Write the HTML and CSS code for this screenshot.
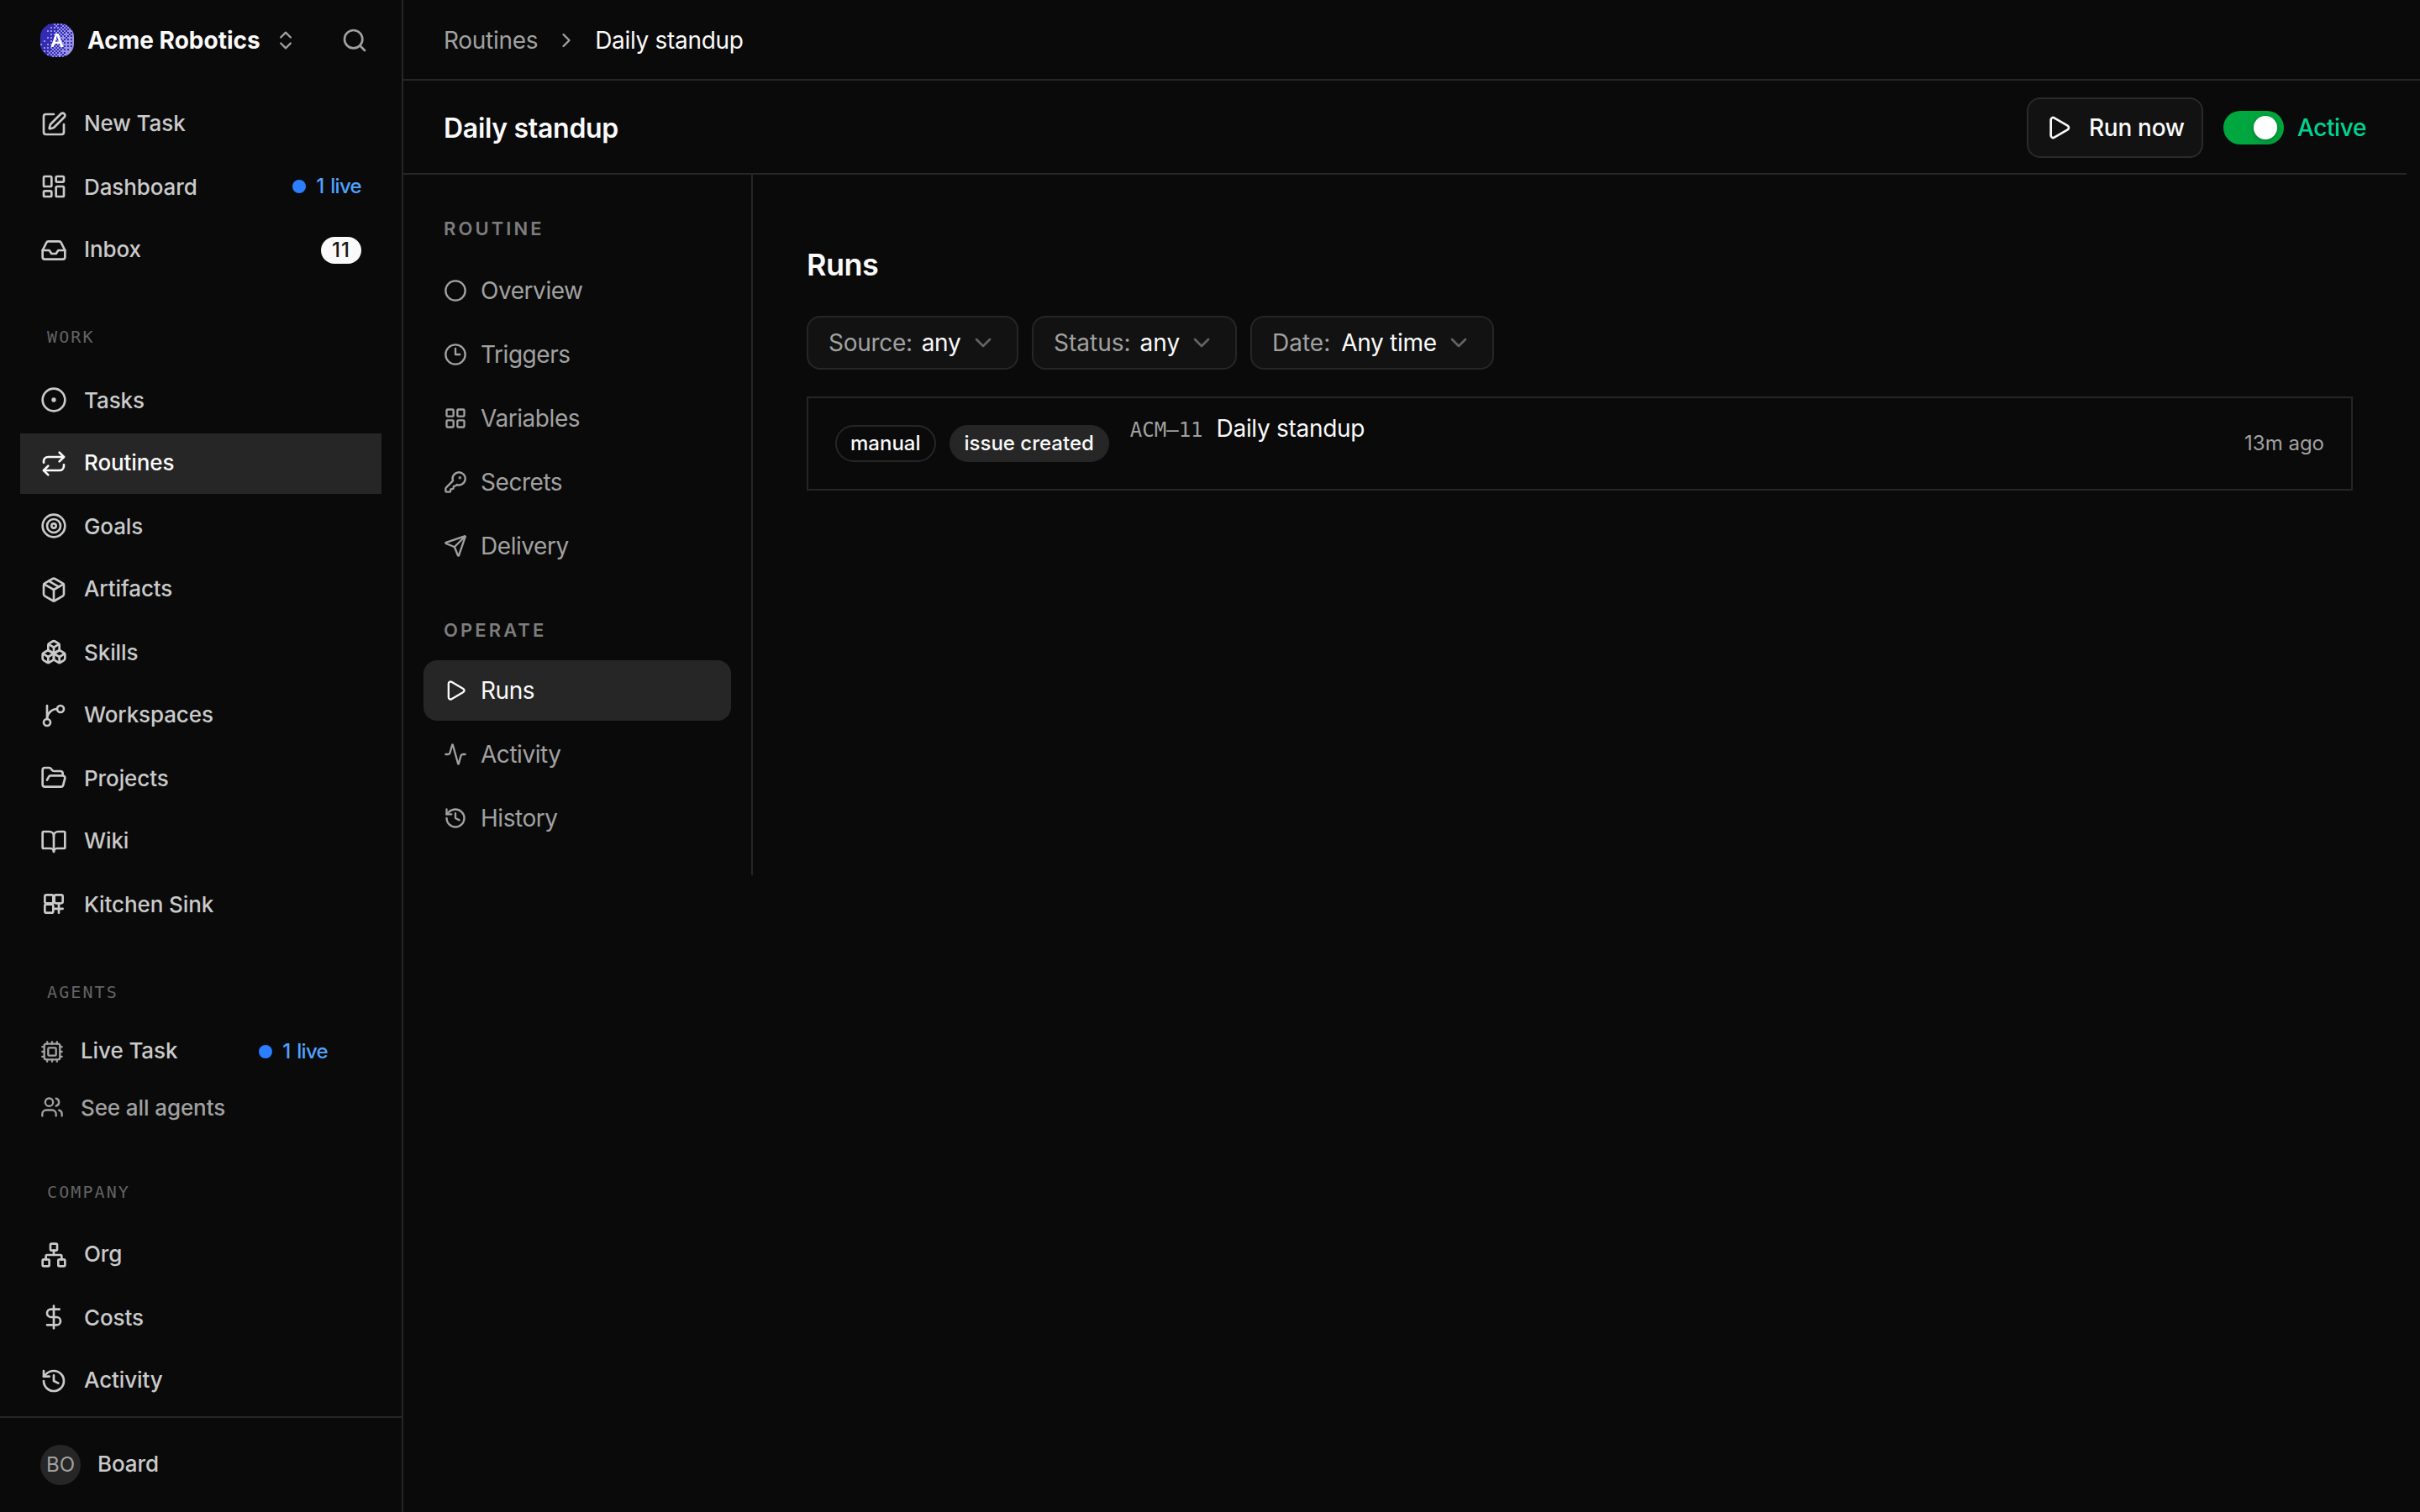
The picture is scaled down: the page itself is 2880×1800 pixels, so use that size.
FILE: index.html
```html
<!DOCTYPE html>
<html lang="en">
<head>
  <meta charset="UTF-8" />
  <meta name="viewport" content="width=device-width, initial-scale=1.0" />
  <title>Daily standup - Acme Robotics</title>
  <link rel="stylesheet" href="styles.css">
</head>
<body>
  <aside class="sidebar">
    <div class="company-bar">
      <button class="company-switcher">
        <span class="company-logo"><canvas id="logoPattern" width="20" height="20"></canvas><b>A</b></span>
        <span class="company-name">Acme Robotics</span>
        <svg class="icon icon-sm" viewBox="0 0 24 24"><path d="m7 15 5 5 5-5"/><path d="m7 9 5-5 5 5"/></svg>
      </button>
      <button class="search-button" aria-label="Search">
        <svg class="icon" viewBox="0 0 24 24"><circle cx="11" cy="11" r="8"/><path d="m21 21-4.3-4.3"/></svg>
      </button>
    </div>

    <nav class="sidebar-nav">
      <div class="nav-group nav-main">
        <a class="nav-item" href="#">
          <svg class="icon" viewBox="0 0 24 24"><path d="M12 3H5a2 2 0 0 0-2 2v14a2 2 0 0 0 2 2h14a2 2 0 0 0 2-2v-7"/><path d="M18.375 2.625a1 1 0 0 1 3 3l-9.013 9.014a2 2 0 0 1-.853.505l-2.873.84a.5.5 0 0 1-.62-.62l.84-2.873a2 2 0 0 1 .506-.852z"/></svg>
          <span class="nav-label">New Task</span>
        </a>
        <a class="nav-item low" href="#">
          <svg class="icon" viewBox="0 0 24 24"><rect width="7" height="9" x="3" y="3" rx="1"/><rect width="7" height="5" x="14" y="3" rx="1"/><rect width="7" height="9" x="14" y="12" rx="1"/><rect width="7" height="5" x="3" y="16" rx="1"/></svg>
          <span class="nav-label">Dashboard</span>
          <span class="live"><i class="live-dot"></i><span>1 live</span></span>
        </a>
        <a class="nav-item" href="#">
          <svg class="icon" viewBox="0 0 24 24"><polyline points="22 12 16 12 14 15 10 15 8 12 2 12"/><path d="M5.45 5.11 2 12v6a2 2 0 0 0 2 2h16a2 2 0 0 0 2-2v-6l-3.45-6.89A2 2 0 0 0 16.76 4H7.24a2 2 0 0 0-1.79 1.11z"/></svg>
          <span class="nav-label">Inbox</span>
          <span class="count">11</span>
        </a>
      </div>

      <h2 class="nav-heading">Work</h2>
      <div class="nav-group nav-work">
        <a class="nav-item low" href="#">
          <svg class="icon" viewBox="0 0 24 24"><circle cx="12" cy="12" r="10"/><circle cx="12" cy="12" r="1"/></svg>
          <span class="nav-label">Tasks</span>
        </a>
        <a class="nav-item active" href="#">
          <svg class="icon" viewBox="0 0 24 24"><path d="m17 2 4 4-4 4"/><path d="M3 11v-1a4 4 0 0 1 4-4h14"/><path d="m7 22-4-4 4-4"/><path d="M21 13v1a4 4 0 0 1-4 4H3"/></svg>
          <span class="nav-label">Routines</span>
        </a>
        <a class="nav-item low" href="#">
          <svg class="icon" viewBox="0 0 24 24"><circle cx="12" cy="12" r="10"/><circle cx="12" cy="12" r="6"/><circle cx="12" cy="12" r="2"/></svg>
          <span class="nav-label">Goals</span>
        </a>
        <a class="nav-item" href="#">
          <svg class="icon" viewBox="0 0 24 24"><path d="M11 21.73a2 2 0 0 0 2 0l7-4A2 2 0 0 0 21 16V8a2 2 0 0 0-1-1.73l-7-4a2 2 0 0 0-2 0l-7 4A2 2 0 0 0 3 8v8a2 2 0 0 0 1 1.73z"/><path d="M12 22V12"/><polyline points="3.29 7 12 12 20.71 7"/><path d="m7.5 4.27 9 5.15"/></svg>
          <span class="nav-label">Artifacts</span>
        </a>
        <a class="nav-item low" href="#">
          <svg class="icon" viewBox="0 0 24 24"><path d="M2.97 12.92A2 2 0 0 0 2 14.63v3.24a2 2 0 0 0 .97 1.71l3 1.8a2 2 0 0 0 2.06 0L12 19v-5.5l-5-3-4.03 2.42Z"/><path d="m7 16.5-4.74-2.85"/><path d="m7 16.5 5-3"/><path d="M7 16.5v5.17"/><path d="M12 13.5V19l3.97 2.38a2 2 0 0 0 2.06 0l3-1.8a2 2 0 0 0 .97-1.71v-3.24a2 2 0 0 0-.97-1.71L17 10.5l-5 3Z"/><path d="m17 16.5-5-3"/><path d="m17 16.5 4.74-2.85"/><path d="M17 16.5v5.17"/><path d="M7.97 4.42A2 2 0 0 0 7 6.13v4.37l5 3 5-3V6.13a2 2 0 0 0-.97-1.71l-3-1.8a2 2 0 0 0-2.06 0l-3 1.8Z"/><path d="M12 8 7.26 5.15"/><path d="m12 8 4.74-2.85"/><path d="M12 13.5V8"/></svg>
          <span class="nav-label">Skills</span>
        </a>
        <a class="nav-item" href="#">
          <svg class="icon" viewBox="0 0 24 24"><path d="M6 3v12"/><circle cx="18" cy="6" r="3"/><circle cx="6" cy="18" r="3"/><path d="M15 6a9 9 0 0 0-9 9"/></svg>
          <span class="nav-label">Workspaces</span>
        </a>
        <a class="nav-item low" href="#">
          <svg class="icon" viewBox="0 0 24 24"><path d="m6 14 1.5-2.9A2 2 0 0 1 9.24 10H20a2 2 0 0 1 1.94 2.5l-1.54 6a2 2 0 0 1-1.95 1.5H4a2 2 0 0 1-2-2V5a2 2 0 0 1 2-2h3.9a2 2 0 0 1 1.69.9l.81 1.2a2 2 0 0 0 1.67.9H18a2 2 0 0 1 2 2v2"/></svg>
          <span class="nav-label">Projects</span>
        </a>
        <a class="nav-item" href="#">
          <svg class="icon" viewBox="0 0 24 24"><path d="M12 7v14"/><path d="M3 18a1 1 0 0 1-1-1V4a1 1 0 0 1 1-1h5a4 4 0 0 1 4 4 4 4 0 0 1 4-4h5a1 1 0 0 1 1 1v13a1 1 0 0 1-1 1h-6a3 3 0 0 0-3 3 3 3 0 0 0-3-3z"/></svg>
          <span class="nav-label">Wiki</span>
        </a>
        <a class="nav-item low" href="#">
          <svg class="icon" viewBox="0 0 24 24"><rect x="4" y="4" width="7.5" height="7.5" rx="1.5"/><rect x="12.5" y="4" width="7.5" height="7.5" rx="1.5"/><rect x="4" y="12.5" width="7.5" height="7.5" rx="1.5"/><path d="M16.5 12.5V20M12.5 16.4H20"/></svg>
          <span class="nav-label">Kitchen Sink</span>
        </a>
      </div>

      <h2 class="nav-heading">Agents</h2>
      <div class="agent-list">
        <a class="agent-item" href="#">
          <svg class="icon icon-sm" viewBox="0 0 24 24"><path d="M12 20v2M12 2v2M17 20v2M17 2v2M2 12h2M2 17h2M2 7h2M20 12h2M20 17h2M20 7h2M7 20v2M7 2v2"/><rect x="4" y="4" width="16" height="16" rx="2"/><rect x="8" y="8" width="8" height="8" rx="1"/></svg>
          <span class="nav-label">Live Task</span>
          <span class="live"><i class="live-dot"></i><span>1 live</span></span>
        </a>
        <a class="agent-item low muted" href="#">
          <svg class="icon icon-sm" viewBox="0 0 24 24"><path d="M16 21v-2a4 4 0 0 0-4-4H6a4 4 0 0 0-4 4v2"/><path d="M16 3.128a4 4 0 0 1 0 7.744"/><path d="M22 21v-2a4 4 0 0 0-3-3.87"/><circle cx="9" cy="7" r="4"/></svg>
          <span class="nav-label">See all agents</span>
        </a>
      </div>

      <h2 class="nav-heading">Company</h2>
      <div class="nav-group nav-company">
        <a class="nav-item" href="#">
          <svg class="icon" viewBox="0 0 24 24"><rect x="16" y="16" width="6" height="6" rx="1"/><rect x="2" y="16" width="6" height="6" rx="1"/><rect x="9" y="2" width="6" height="6" rx="1"/><path d="M5 16v-3a1 1 0 0 1 1-1h12a1 1 0 0 1 1 1v3"/><path d="M12 12V8"/></svg>
          <span class="nav-label">Org</span>
        </a>
        <a class="nav-item low" href="#">
          <svg class="icon" viewBox="0 0 24 24"><path d="M12 2v20"/><path d="M17 5H9.5a3.5 3.5 0 0 0 0 7h5a3.5 3.5 0 0 1 0 7H6"/></svg>
          <span class="nav-label">Costs</span>
        </a>
        <a class="nav-item" href="#">
          <svg class="icon" viewBox="0 0 24 24"><path d="M3 12a9 9 0 1 0 9-9 9.75 9.75 0 0 0-6.74 2.74L3 8"/><path d="M3 3v5h5"/><path d="M12 7v5l4 2"/></svg>
          <span class="nav-label">Activity</span>
        </a>
      </div>
    </nav>

    <footer class="sidebar-footer">
      <span class="avatar">BO</span>
      <span class="nav-label">Board</span>
    </footer>
  </aside>

  <div class="page">
    <header class="breadcrumbs">
      <a href="#">Routines</a>
      <svg class="icon icon-sm" viewBox="0 0 24 24"><path d="m9 18 6-6-6-6"/></svg>
      <span class="current">Daily standup</span>
    </header>

    <main class="routine">
      <div class="routine-header">
        <h1>Daily standup</h1>
        <button class="run-button">
          <svg class="icon" viewBox="0 0 24 24"><path d="M5 5a2 2 0 0 1 3.008-1.728l11.997 6.998a2 2 0 0 1 .003 3.458l-12 7A2 2 0 0 1 5 19z"/></svg>
          <span>Run now</span>
        </button>
        <span class="toggle"><i class="toggle-thumb"></i></span>
        <span class="status">Active</span>
      </div>

      <div class="routine-body">
        <nav class="subnav">
          <h2 class="subnav-heading">Routine</h2>
          <a class="subnav-item" href="#">
            <svg class="icon icon-sm" viewBox="0 0 24 24"><circle cx="12" cy="12" r="10"/></svg>
            <span>Overview</span>
          </a>
          <a class="subnav-item" href="#">
            <svg class="icon icon-sm" viewBox="0 0 24 24"><circle cx="12" cy="12" r="10"/><path d="M12 6v6h4.5"/></svg>
            <span>Triggers</span>
          </a>
          <a class="subnav-item" href="#">
            <svg class="icon icon-sm" viewBox="0 0 24 24"><rect width="7" height="7" x="3" y="3" rx="1"/><rect width="7" height="7" x="14" y="3" rx="1"/><rect width="7" height="7" x="14" y="14" rx="1"/><rect width="7" height="7" x="3" y="14" rx="1"/></svg>
            <span>Variables</span>
          </a>
          <a class="subnav-item" href="#">
            <svg class="icon icon-sm" viewBox="0 0 24 24"><path d="M2.586 17.414A2 2 0 0 0 2 18.828V21a1 1 0 0 0 1 1h3a1 1 0 0 0 1-1v-1a1 1 0 0 1 1-1h1a1 1 0 0 0 1-1v-1a1 1 0 0 1 1-1h.172a2 2 0 0 0 1.414-.586l.814-.814a6.5 6.5 0 1 0-4-4z"/><circle cx="16.5" cy="7.5" r=".5" fill="currentColor"/></svg>
            <span>Secrets</span>
          </a>
          <a class="subnav-item" href="#">
            <svg class="icon icon-sm" viewBox="0 0 24 24"><path d="M14.536 21.686a.5.5 0 0 0 .937-.024l6.5-19a.496.496 0 0 0-.635-.635l-19 6.5a.5.5 0 0 0-.024.937l7.93 3.18a2 2 0 0 1 1.112 1.11z"/><path d="m21.854 2.147-10.94 10.939"/></svg>
            <span>Delivery</span>
          </a>

          <h2 class="subnav-heading operate">Operate</h2>
          <a class="subnav-item active" href="#">
            <svg class="icon icon-sm" viewBox="0 0 24 24"><path d="M5 5a2 2 0 0 1 3.008-1.728l11.997 6.998a2 2 0 0 1 .003 3.458l-12 7A2 2 0 0 1 5 19z"/></svg>
            <span>Runs</span>
          </a>
          <a class="subnav-item" href="#">
            <svg class="icon icon-sm" viewBox="0 0 24 24"><path d="M22 12h-2.48a2 2 0 0 0-1.93 1.46l-2.35 8.36a.25.25 0 0 1-.48 0L9.24 2.18a.25.25 0 0 0-.48 0l-2.35 8.36A2 2 0 0 1 4.49 12H2"/></svg>
            <span>Activity</span>
          </a>
          <a class="subnav-item" href="#">
            <svg class="icon icon-sm" viewBox="0 0 24 24"><path d="M3 12a9 9 0 1 0 9-9 9.75 9.75 0 0 0-6.74 2.74L3 8"/><path d="M3 3v5h5"/><path d="M12 7v5l4 2"/></svg>
            <span>History</span>
          </a>
        </nav>

        <section class="runs">
          <h2>Runs</h2>
          <div class="filters">
            <button class="filter filter-source">
              <span class="filter-name">Source:</span><span class="filter-value">any</span>
              <svg class="icon" viewBox="0 0 24 24"><path d="m6 9 6 6 6-6"/></svg>
            </button>
            <button class="filter filter-status">
              <span class="filter-name">Status:</span><span class="filter-value">any</span>
              <svg class="icon" viewBox="0 0 24 24"><path d="m6 9 6 6 6-6"/></svg>
            </button>
            <button class="filter filter-date">
              <span class="filter-name">Date:</span><span class="filter-value">Any time</span>
              <svg class="icon" viewBox="0 0 24 24"><path d="m6 9 6 6 6-6"/></svg>
            </button>
          </div>

          <div class="run-row">
            <span class="badge">manual</span>
            <span class="badge badge-filled">issue created</span>
            <a class="run-issue" href="#"><span class="issue-id">ACM–11</span><span class="issue-title">Daily standup</span></a>
            <time>13m ago</time>
          </div>
        </section>
      </div>
    </main>
  </div>

  <script>
    // Ordered dither for the company logo, dark on the left and light on the right
    const bayer = [0, 8, 2, 10, 12, 4, 14, 6, 3, 11, 1, 9, 15, 7, 13, 5];
    const ctx = document.getElementById("logoPattern").getContext("2d");
    for (let y = 0; y < 20; y++) {
      for (let x = 0; x < 20; x++) {
        const level = (x * 0.8 + y * 0.25 - 2) / 19;
        const threshold = (bayer[(y % 4) * 4 + (x % 4)] + 0.5) / 16;
        ctx.fillStyle = level > threshold ? "#9a93e3" : "#322cb4";
        ctx.fillRect(x, y, 1, 1);
      }
    }
  </script>
</body>
</html>
```
FILE: styles.css
```css
:root {
  --bg: #0a0a0a;
  --card: #121212;
  --accent: #262626;
  --border: #262626;
  --text: #fafafa;
  --text-soft: #cacaca;
  --muted: #a1a1a1;
  --blue: #2b7fff;
  --blue-text: #51a2ff;
  --green: #00a63e;
  --green-text: #00d492;
}

* {
  box-sizing: border-box;
}

body {
  margin: 0;
  height: 100vh;
  display: flex;
  overflow: hidden;
  font-family: Inter, "Liberation Sans", sans-serif;
  font-size: 28px;
  line-height: 40px;
  background: var(--bg);
  color: var(--text);
}

a {
  color: inherit;
  text-decoration: none;
}

h1,
h2 {
  margin: 0;
}

button {
  margin: 0;
  padding: 0;
  border: none;
  background: none;
  color: inherit;
  font: inherit;
  letter-spacing: inherit;
}

.icon {
  width: 32px;
  height: 32px;
  flex-shrink: 0;
  fill: none;
  stroke: currentColor;
  stroke-width: 2;
  stroke-linecap: round;
  stroke-linejoin: round;
}

.icon-sm {
  width: 28px;
  height: 28px;
}

/* Sidebar */
.sidebar {
  width: 480px;
  flex-shrink: 0;
  display: flex;
  flex-direction: column;
  border-right: 2px solid var(--border);
}

.company-bar {
  height: 96px;
  flex-shrink: 0;
  display: flex;
  align-items: center;
  justify-content: space-between;
  padding: 0 40px 0 48px;
}

.company-switcher {
  display: flex;
  align-items: center;
  color: var(--muted);
}

.company-logo {
  position: relative;
  width: 40px;
  height: 40px;
  border-radius: 16px;
  overflow: hidden;
}

.company-logo canvas {
  display: block;
  width: 40px;
  height: 40px;
  image-rendering: pixelated;
}

.company-logo b {
  position: absolute;
  inset: 0;
  text-align: center;
  font-size: 22px;
  font-weight: 600;
  color: #fff;
}

.company-name {
  margin-left: 16px;
  margin-right: 16px;
  font-weight: 700;
  color: var(--text);
}

.search-button {
  display: flex;
  color: var(--muted);
}

.sidebar-nav {
  flex: 1;
  padding: 16px 24px 0;
}

.nav-group,
.agent-list,
.sidebar-footer {
  font-size: 26px;
  font-weight: 500;
  letter-spacing: -0.1px;
  color: var(--text-soft);
}

.nav-item {
  height: 72px;
  margin-bottom: 2px;
  padding: 0 24px;
  display: flex;
  align-items: center;
  gap: 20px;
}

.nav-item.low {
  margin-bottom: 4px;
}

.nav-item.active {
  background: var(--accent);
  color: var(--text);
}

.nav-label {
  flex: 1;
  padding-bottom: 2px;
}

.low .nav-label {
  padding: 2px 0 0;
}

.live {
  display: flex;
  align-items: center;
  gap: 12px;
  font-size: 24px;
  letter-spacing: -0.7px;
  word-spacing: 2px;
  color: var(--blue-text);
}

.live-dot {
  width: 16px;
  height: 16px;
  border-radius: 50%;
  background: var(--blue);
}

.count {
  width: 48px;
  height: 32px;
  border-radius: 16px;
  background: var(--text);
  color: #171717;
  font-size: 24px;
  line-height: 32px;
  letter-spacing: 1px;
  text-align: center;
}

.nav-heading {
  height: 40px;
  padding-left: 32px;
  margin: 48px 0 20px;
  font-family: "DejaVu Sans Mono", monospace;
  font-size: 20px;
  font-weight: 400;
  line-height: 42px;
  letter-spacing: 2.1px;
  text-transform: uppercase;
  color: #636363;
}

.nav-main + .nav-heading {
  margin-top: 46px;
}

.agent-item {
  height: 64px;
  margin-bottom: 2px;
  padding: 0 64px 0 24px;
  display: flex;
  align-items: center;
  gap: 20px;
}

.agent-item .icon,
.agent-item.muted {
  color: var(--muted);
}

.sidebar-footer {
  height: 114px;
  display: flex;
  align-items: center;
  gap: 20px;
  padding: 0 48px;
  border-top: 2px solid var(--border);
}

.avatar {
  width: 48px;
  height: 48px;
  border-radius: 50%;
  background: var(--accent);
  color: var(--muted);
  font-size: 24px;
  font-weight: 400;
  line-height: 48px;
  text-align: center;
}

/* Page */
.page {
  flex: 1;
  letter-spacing: -0.3px;
}

.breadcrumbs {
  height: 96px;
  display: flex;
  align-items: center;
  gap: 20px;
  padding: 2px 0 0 48px;
  border-bottom: 2px solid var(--border);
  color: var(--muted);
}

.breadcrumbs .current {
  color: var(--text);
}

.routine {
  margin-right: 16px;
}

.routine-header {
  height: 112px;
  display: flex;
  align-items: center;
  padding: 2px 48px 0;
  border-bottom: 2px solid var(--border);
}

.routine-header h1 {
  flex: 1;
  padding-top: 2px;
  font-size: 32px;
  font-weight: 600;
}

.run-button {
  height: 72px;
  width: 210px;
  display: flex;
  align-items: center;
  gap: 20px;
  padding-left: 20px;
  border: 2px solid #2a2a2a;
  border-radius: 16px;
  background: var(--card);
  font-weight: 500;
}

.toggle {
  width: 72px;
  height: 40px;
  margin: 0 16px 0 24px;
  padding: 6px 8px;
  display: flex;
  justify-content: flex-end;
  border-radius: 20px;
  background: var(--green);
}

.toggle-thumb {
  width: 28px;
  height: 28px;
  border-radius: 50%;
  background: #fff;
  box-shadow: 0 2px 6px rgba(0, 0, 0, 0.25);
}

.status {
  width: 82px;
  font-weight: 500;
  letter-spacing: -0.4px;
  color: var(--green-text);
}

.routine-body {
  display: flex;
  align-items: flex-start;
}

/* Routine sections */
.subnav {
  width: 416px;
  padding: 48px 24px 32px;
  border-right: 2px solid var(--border);
}

.subnav-heading {
  height: 32px;
  margin: 0 0 22px;
  padding-left: 24px;
  font-size: 22px;
  font-weight: 600;
  line-height: 32px;
  letter-spacing: 3.1px;
  text-transform: uppercase;
  color: #7d7d7d;
}

.subnav-heading.operate {
  margin: 48px 0 20px;
}

.subnav-item {
  height: 72px;
  margin-top: 4px;
  padding: 0 24px;
  display: flex;
  align-items: center;
  gap: 16px;
  letter-spacing: -0.45px;
  color: var(--muted);
}

.subnav-heading + .subnav-item {
  margin-top: 0;
}

.subnav-item.active {
  border-radius: 16px;
  background: var(--accent);
  color: var(--text);
}

/* Runs */
.runs {
  flex: 1;
  padding: 80px 64px 0;
}

.runs h2 {
  height: 56px;
  font-size: 36px;
  font-weight: 600;
  line-height: 54px;
  letter-spacing: -0.5px;
}

.filters {
  display: flex;
  gap: 16px;
  margin: 32px 0;
}

.filter {
  height: 64px;
  display: flex;
  align-items: center;
  padding: 0 24px;
  border: 2px solid var(--border);
  border-radius: 16px;
  background: var(--card);
}

.filter-source {
  width: 252px;
}

.filter-status {
  width: 244px;
  letter-spacing: 0;
}

.filter-date {
  width: 290px;
}

.filter-name {
  margin-right: 11px;
  color: var(--muted);
}

.filter-date .filter-name {
  margin-right: 13px;
  letter-spacing: 0;
}

.filter .icon {
  margin-left: auto;
  color: #636363;
}

.run-row {
  height: 112px;
  display: flex;
  align-items: center;
  padding: 0 32px;
  border: 2px solid var(--border);
}

.badge {
  height: 44px;
  margin-right: 16px;
  padding: 0 16px;
  border: 2px solid var(--border);
  border-radius: 22px;
  font-size: 24px;
  font-weight: 500;
  line-height: 40px;
  letter-spacing: 0;
}

.badge-filled {
  margin-right: 25px;
  background: var(--accent);
}

.run-issue {
  flex: 1;
  height: 76px;
}

.issue-id {
  margin-right: 16px;
  font-family: "DejaVu Sans Mono", monospace;
  font-size: 24px;
  letter-spacing: 0;
  color: var(--muted);
}

.run-row time {
  font-size: 24px;
  letter-spacing: 0;
  color: var(--muted);
}
```
